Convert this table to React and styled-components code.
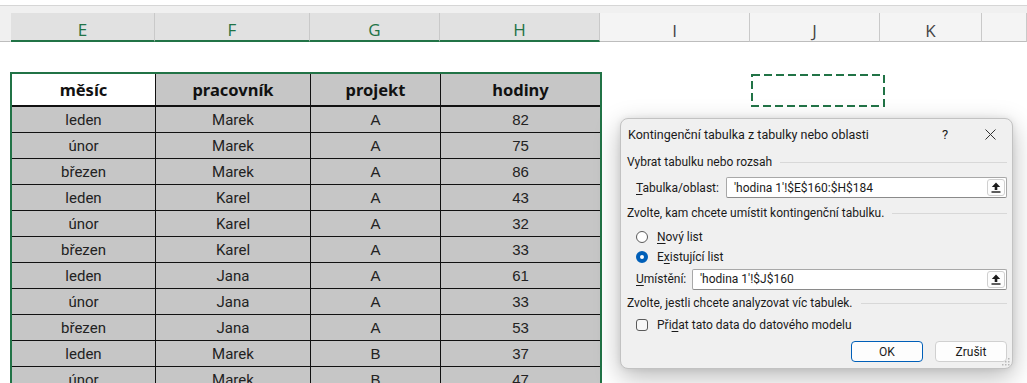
import styled, { createGlobalStyle } from "styled-components";

const GREEN = "#217346";

const GlobalStyle = createGlobalStyle`
  html, body {
    margin: 0;
    padding: 0;
    background: #ffffff;
    overflow: hidden;
  }
`;

const columns = [
  { name: "", width: 11, stub: true },
  { name: "E", width: 144, selected: true },
  { name: "F", width: 155, selected: true },
  { name: "G", width: 130, selected: true },
  { name: "H", width: 160, selected: true },
  { name: "I", width: 150 },
  { name: "J", width: 130 },
  { name: "K", width: 102 },
  { name: "", width: 45 },
];

const rows = [
  ["leden", "Marek", "A", "82"],
  ["únor", "Marek", "A", "75"],
  ["březen", "Marek", "A", "86"],
  ["leden", "Karel", "A", "43"],
  ["únor", "Karel", "A", "32"],
  ["březen", "Karel", "A", "33"],
  ["leden", "Jana", "A", "61"],
  ["únor", "Jana", "A", "33"],
  ["březen", "Jana", "A", "53"],
  ["leden", "Marek", "B", "37"],
  ["únor", "Marek", "B", "47"],
];

const heads = ["měsíc", "pracovník", "projekt", "hodiny"];

const UploadIcon = () => (
  <svg width="10" height="11" viewBox="0 0 10 11">
    <path d="M5 0.5 L9.2 5 L6.3 5 L6.3 8 L3.7 8 L3.7 5 L0.8 5 Z" fill="#1a1a1a" />
    <rect x="0.5" y="9.3" width="9" height="1.4" fill="#1a1a1a" />
  </svg>
);

const CloseIcon = () => (
  <svg width="11" height="11" viewBox="0 0 11 11">
    <path d="M0.5 0.5 L10.5 10.5 M10.5 0.5 L0.5 10.5" stroke="#333" strokeWidth="1" />
  </svg>
);

const Grip = () => (
  <svg width="9" height="9" viewBox="0 0 9 9">
    <g fill="#b8b8b8">
      <rect x="7" y="1" width="1.5" height="1.5" />
      <rect x="4" y="4" width="1.5" height="1.5" />
      <rect x="7" y="4" width="1.5" height="1.5" />
      <rect x="1" y="7" width="1.5" height="1.5" />
      <rect x="4" y="7" width="1.5" height="1.5" />
      <rect x="7" y="7" width="1.5" height="1.5" />
    </g>
  </svg>
);

const App = () => {
  return (
    <Screen>
      <GlobalStyle />
      <TopStrip />
      <HeaderBand>
        {columns.map((c, i) => (
          <ColHead key={i} $w={c.width} $selected={c.selected} $stub={c.stub}>
            {c.name}
          </ColHead>
        ))}
      </HeaderBand>

      <Sheet>
        <DataTable>
          {heads.map((h, i) => (
            <HeadCell key={h} $active={i === 0}>
              {h}
            </HeadCell>
          ))}
          {rows.map((r, ri) =>
            r.map((v, ci) => (
              <Cell key={ri + "-" + ci} $last={ci === 3} $arial={ci >= 2}>
                {v}
              </Cell>
            ))
          )}
        </DataTable>
      </Sheet>

      <Marquee>
        <svg width="134" height="33" viewBox="0 0 134 33">
          <rect
            x="1"
            y="1"
            width="132"
            height="31"
            fill="none"
            stroke={GREEN}
            strokeWidth="2"
            strokeDasharray="8 4"
          />
        </svg>
      </Marquee>

      <Dialog>
        <TitleBar>
          <Title>Kontingenční tabulka z tabulky nebo oblasti</Title>
          <Help>?</Help>
          <CloseBtn>
            <CloseIcon />
          </CloseBtn>
        </TitleBar>

        <Section $h={26}>
          <span>Vybrat tabulku nebo rozsah</span>
          <Rule />
        </Section>
        <Field $h={25}>
          <FieldLabel $w={90}>
            <U>T</U>abulka/oblast:
          </FieldLabel>
          <Input>
            <InputText>'hodina 1'!$E$160:$H$184</InputText>
            <PickBtn>
              <UploadIcon />
            </PickBtn>
          </Input>
        </Field>

        <Section $h={26}>
          <span>Zvolte, kam chcete umístit kontingenční tabulku.</span>
          <Rule />
        </Section>
        <Option $h={21}>
          <Radio />
          <span>
            <U>N</U>ový list
          </span>
        </Option>
        <Option $h={19}>
          <Radio $checked />
          <span>
            E<U>x</U>istující list
          </span>
        </Option>
        <Field $h={26}>
          <FieldLabel $w={56}>
            <U>U</U>místění:
          </FieldLabel>
          <Input>
            <InputText>'hodina 1'!$J$160</InputText>
            <PickBtn>
              <UploadIcon />
            </PickBtn>
          </Input>
        </Field>

        <Section $h={22}>
          <span>Zvolte, jestli chcete analyzovat víc tabulek.</span>
          <Rule />
        </Section>
        <Option $h={21}>
          <Check />
          <span>
            Při<U>d</U>at tato data do datového modelu
          </span>
        </Option>

        <Buttons>
          <Button $primary>OK</Button>
          <Button>Zrušit</Button>
        </Buttons>
        <GripSpot>
          <Grip />
        </GripSpot>
      </Dialog>
    </Screen>
  );
};

const Screen = styled.div`
  position: relative;
  width: 1027px;
  height: 383px;
  overflow: hidden;
  background: #ffffff;
`;

const TopStrip = styled.div`
  height: 5px;
  background: #ffffff;
  border-bottom: 1px solid #d6d6d6;
`;

const HeaderBand = styled.div`
  display: flex;
  align-items: flex-end;
  height: 36px;
  background: #f0f0f0;
`;

const ColHead = styled.div`
  box-sizing: border-box;
  width: ${(p) => p.$w}px;
  flex: none;
  height: ${(p) => (p.$stub ? "36px" : "29px")};
  padding-top: 6px;
  display: flex;
  align-items: center;
  justify-content: center;
  font-family: "Open Sans", "Noto Sans", sans-serif;
  font-size: 17px;
  color: ${(p) => (p.$selected ? GREEN : "#444444")};
  background: ${(p) => (p.$selected ? "#e1e1e1" : p.$stub ? "#f0f0f0" : "#f4f4f4")};
  border-right: 1px solid ${(p) => (p.$stub ? "transparent" : "#c9c9c9")};
  border-bottom: ${(p) => (p.$selected ? `2px solid ${GREEN}` : "1px solid #bdbdbd")};
`;

const Sheet = styled.div`
  padding: 30px 0 0 10px;
`;

const DataTable = styled.div`
  display: grid;
  grid-template-columns: 144px 155px 130px 159px;
  width: 592px;
  box-sizing: border-box;
  border: 2px solid ${GREEN};
  border-bottom: none;
`;

const HeadCell = styled.div`
  box-sizing: border-box;
  height: 33px;
  display: flex;
  align-items: center;
  justify-content: center;
  font-family: "Noto Sans", "Open Sans", sans-serif;
  font-weight: 700;
  font-size: 16.5px;
  color: #111111;
  background: ${(p) => (p.$active ? "#ffffff" : "#c6c6c6")};
  border-bottom: 2px solid #111111;
  border-right: 1px solid #111111;
  &:nth-child(4) {
    border-right: none;
  }
`;

const Cell = styled.div`
  box-sizing: border-box;
  height: 26px;
  display: flex;
  align-items: center;
  justify-content: center;
  font-family: ${(p) => (p.$arial ? `"Liberation Sans", Arial, sans-serif` : `Roboto, "Noto Sans", sans-serif`)};
  font-size: 15px;
  color: #222222;
  background: #c6c6c6;
  border-bottom: 1px solid #111111;
  border-right: ${(p) => (p.$last ? "none" : "1px solid #111111")};
`;

const Marquee = styled.div`
  position: absolute;
  left: 751px;
  top: 74px;
  width: 134px;
  height: 33px;
  line-height: 0;
`;

const Dialog = styled.div`
  position: absolute;
  left: 620px;
  top: 118px;
  width: 393px;
  height: 251px;
  box-sizing: border-box;
  border: 1px solid #c2c2c2;
  border-radius: 8px;
  background: #f0f0f0;
  box-shadow: 0 8px 26px rgba(0, 0, 0, 0.28), 0 0 6px rgba(0, 0, 0, 0.08);
  padding: 0 5px 0 6px;
  display: flex;
  flex-direction: column;
  font-family: Roboto, "Noto Sans", sans-serif;
  font-size: 12px;
  color: #1a1a1a;
`;

const TitleBar = styled.div`
  height: 30px;
  display: flex;
  align-items: center;
  padding-left: 1px;
`;

const Title = styled.div`
  flex: 1;
  font-size: 12.5px;
`;

const Help = styled.div`
  width: 12px;
  text-align: center;
  font-size: 13px;
  margin-right: 34px;
`;

const CloseBtn = styled.div`
  width: 11px;
  height: 11px;
  margin-right: 11px;
  line-height: 0;
`;

const Section = styled.div`
  height: ${(p) => p.$h}px;
  display: flex;
  align-items: center;
  white-space: nowrap;
`;

const Rule = styled.div`
  flex: 1;
  height: 1px;
  background: #d8d8d8;
  margin-left: 8px;
  margin-top: 1px;
`;

const Field = styled.div`
  height: ${(p) => p.$h}px;
  display: flex;
  align-items: center;
  padding-left: 9px;
`;

const FieldLabel = styled.div`
  width: ${(p) => p.$w}px;
  flex: none;
`;

const Input = styled.div`
  flex: 1;
  height: 21px;
  box-sizing: border-box;
  display: flex;
  align-items: center;
  background: #ffffff;
  border: 1px solid #a8a8a8;
  border-bottom-color: #8a8a8a;
  border-radius: 2px;
  padding: 0 1px 0 7px;
`;

const InputText = styled.div`
  flex: 1;
`;

const PickBtn = styled.div`
  width: 18px;
  height: 17px;
  box-sizing: border-box;
  border: 1px solid #d0d0d0;
  border-radius: 3px;
  background: #fdfdfd;
  display: flex;
  align-items: center;
  justify-content: center;
`;

const U = styled.span`
  text-decoration: underline;
  text-underline-offset: 2px;
`;

const Option = styled.div`
  height: ${(p) => p.$h}px;
  display: flex;
  align-items: center;
  padding-left: 9px;
  gap: 9px;
`;

const Radio = styled.div`
  width: 12px;
  height: 12px;
  box-sizing: border-box;
  border-radius: 50%;
  flex: none;
  border: ${(p) => (p.$checked ? `4px solid #005fb8` : "1px solid #5a5a5a")};
  background: #ffffff;
`;

const Check = styled.div`
  width: 12px;
  height: 12px;
  box-sizing: border-box;
  border-radius: 3px;
  flex: none;
  border: 1px solid #5a5a5a;
  background: #f7f7f7;
`;

const Buttons = styled.div`
  margin-top: 6px;
  display: flex;
  justify-content: flex-end;
  gap: 12px;
`;

const Button = styled.div`
  width: 72px;
  height: 21px;
  box-sizing: border-box;
  display: flex;
  align-items: center;
  justify-content: center;
  border-radius: 4px;
  background: #fdfdfd;
  border: 1px solid ${(p) => (p.$primary ? "#005fb8" : "#d0d0d0")};
`;

const GripSpot = styled.div`
  position: absolute;
  right: 2px;
  bottom: 2px;
  line-height: 0;
`;

export default App;
